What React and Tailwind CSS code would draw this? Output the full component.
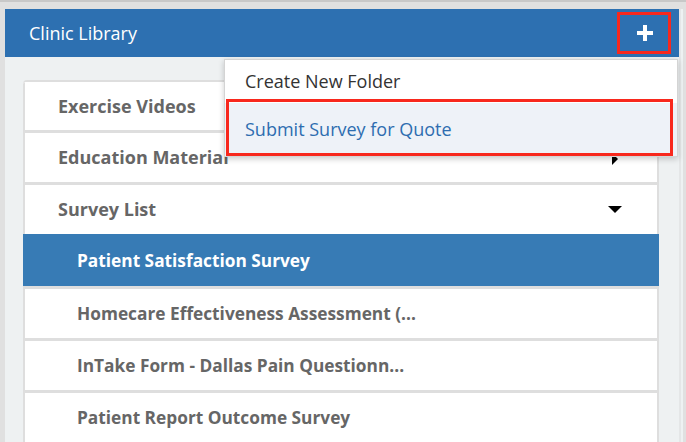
import React from 'react';

const rows = [
  { label: 'Exercise Videos', level: 0 },
  { label: 'Education Material', level: 0, caret: 'right' },
  { label: 'Survey List', level: 0, caret: 'down' },
  { label: 'Patient Satisfaction Survey', level: 1, active: true },
  { label: 'Homecare Effectiveness Assessment (...', level: 1 },
  { label: 'InTake Form - Dallas Pain Questionn...', level: 1 },
  { label: 'Patient Report Outcome Survey', level: 1 },
];

const App = () => {
  return (
    <div
      className="w-[686px] h-[442px] overflow-hidden bg-[#e0e0e0] relative"
      style={{ fontFamily: '"Open Sans", "Liberation Sans", sans-serif' }}
    >
      <div className="h-[2px] bg-[#c8c8c8]" />
      <div className="flex pl-[5px] pt-[7px] h-full">
        {/* Panel */}
        <div className="w-[674px] flex flex-col h-full">
          {/* Header */}
          <div className="h-[48px] bg-[#2d70b1] flex items-center justify-between pl-[24px] pr-[26px]">
            <span className="text-white text-[18px]">Clinic Library</span>
            <svg width="16" height="16" viewBox="0 0 16 16">
              <rect x="6" y="0" width="4" height="16" fill="#fff" />
              <rect x="0" y="6" width="16" height="4" fill="#fff" />
            </svg>
          </div>

          {/* Body */}
          <div className="flex-1 bg-[#eef1f2] pt-[23px] pl-[18px] pr-[20px]">
            <div className="flex flex-col rounded-t-[4px] overflow-hidden bg-white border-t-2 border-[#dedede]">
              {rows.map((row, i) => (
                <div
                  key={row.label}
                  className={
                    row.active
                      ? 'h-[52px] bg-[#377bb5] flex items-center pl-[54px] pt-[2px] text-white font-bold text-[17.3px]'
                      : `${i === 0 ? 'h-[48px]' : 'h-[52px] border-t-[3px]'} border-x-2 border-[#dedede] bg-white flex items-center justify-between text-[#666] font-bold ${row.level === 0 ? 'pl-[33px] text-[18px]' : 'pl-[52px] text-[17.3px]'} pr-[35px]`
                  }
                >
                  <span>{row.label}</span>
                  {row.caret === 'down' && (
                    <span className="w-0 h-0 border-x-[7px] border-x-transparent border-t-[7px] border-t-black" />
                  )}
                  {row.caret === 'right' && (
                    <span className="w-0 h-0 mr-[4px] border-y-[6px] border-y-transparent border-l-[6px] border-l-black mt-[2px]" />
                  )}
                </div>
              ))}
            </div>
          </div>
        </div>
        <div className="w-[2px] bg-[#e4e6e7]" />
        <div className="w-[2px] bg-[#eef1f2]" />
      </div>

      {/* Dropdown menu */}
      <div className="absolute left-[224px] top-[59px] w-[454px] bg-white border border-[#d4d4d4] shadow-[0_2px_6px_rgba(0,0,0,0.2)]">
        <div className="h-[43px] flex items-center pl-[20px] text-[18px] text-[#333]">Create New Folder</div>
        <div className="h-[53px] flex items-center pl-[20px] text-[18px] text-[#2d6db0] bg-[#eef2f8]">Submit Survey for Quote</div>
      </div>

      {/* Highlight boxes */}
      <div className="absolute left-[617px] top-[12px] w-[54px] h-[42px] border-[3px] border-[#f8281d]" />
      <div className="absolute left-[226px] top-[99px] w-[447px] h-[57px] border-[3px] border-[#f8281d]" />
    </div>
  );
};

export default App;
